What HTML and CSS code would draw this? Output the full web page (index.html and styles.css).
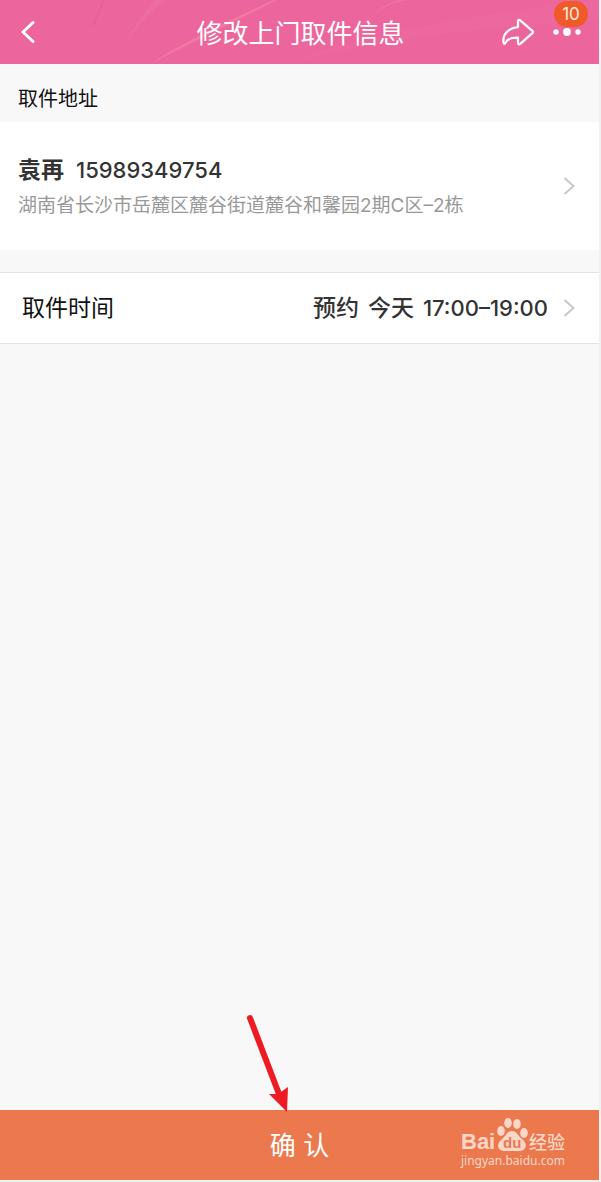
FILE: index.html
```html
<!DOCTYPE html>
<html lang="zh-CN">
<head>
    <meta charset="UTF-8">
    <meta name="viewport" content="width=device-width, initial-scale=1.0">
    <title>修改上门取件信息</title>
    <link rel="stylesheet" href="styles.css">
</head>
<body>
    <header class="header">
        <svg class="header-bg" viewBox="0 0 600 64" preserveAspectRatio="none" aria-hidden="true">
            <path d="M104 0 L93 26" stroke="#e65590" stroke-width="1.5" opacity=".4"/>
            <path d="M118 64 Q128 30 165 0 H155 Q130 28 118 64Z" fill="#f08fa8" opacity=".2"/>
            <path d="M150 64 L278 0 H274 Q190 38 150 64Z" fill="#f5a0b0" opacity=".35"/>
            <path d="M366 22 Q385 2 410 0 H398 Q380 6 366 22Z" fill="#f5a0a8" opacity=".25"/>
            <path d="M280 64 Q420 18 600 0 V20 Q420 30 280 64Z" fill="#ef76a8" opacity=".2"/>
        </svg>
        <button type="button" class="icon-btn" aria-label="返回">
            <svg width="16" height="24" viewBox="0 0 16 24"><path d="M14 2.5 L4 12 L14 21.5" fill="none" stroke="#fff" stroke-width="3" stroke-linecap="round" stroke-linejoin="round"/></svg>
        </button>
        <h1>修改上门取件信息</h1>
        <div class="header-actions">
            <button type="button" class="icon-btn" aria-label="分享">
                <svg width="34" height="28" viewBox="0 0 34 28"><path d="M17 3.4 Q17 .9 19.2 2.3 L31.4 12.8 Q32.6 14 31.4 15.2 L19.5 25.6 Q17 27.4 17 24.5 V19.6 C10 19.4 6.2 21.2 4.6 24.6 Q3.2 27.4 2.4 24.2 C1.6 15.5 8.5 9.8 17 9.2 Z" fill="none" stroke="#fff" stroke-width="2.2" stroke-linejoin="round"/></svg>
            </button>
            <button type="button" class="icon-btn more-btn" aria-label="更多">
                <svg width="30" height="10" viewBox="0 0 30 10" fill="#fff"><circle cx="4" cy="5" r="2.7"/><circle cx="15" cy="5" r="3.9"/><circle cx="26" cy="5" r="2.7"/></svg>
                <span class="badge">10</span>
            </button>
        </div>
    </header>

    <main>
        <h2 class="section-title">取件地址</h2>
        <a href="#" class="address">
            <div class="address-info">
                <p class="contact"><span>袁再</span><span class="num">15989349754</span></p>
                <p class="detail">湖南省长沙市岳麓区麓谷街道麓谷和馨园2期C区–2栋</p>
            </div>
            <svg class="arrow" width="12" height="18" viewBox="0 0 12 18"><path d="M1.5 1 L10.5 9 L1.5 17"/></svg>
        </a>
        <a href="#" class="time">
            <span class="time-label">取件时间</span>
            <span class="time-value"><span>预约</span> <span>今天</span> <span class="num">17:00–19:00</span></span>
            <svg class="arrow" width="12" height="18" viewBox="0 0 12 18"><path d="M1.5 1 L10.5 9 L1.5 17"/></svg>
        </a>
    </main>

    <footer class="footer">
        <svg class="pointer" width="44" height="98" viewBox="0 0 44 98" aria-hidden="true">
            <path d="M6 4 L35 80" stroke="#ed1c24" stroke-width="6" stroke-linecap="round"/>
            <path d="M43 98 L25 80 L34 80 L44 73 Z" fill="#ed1c24"/>
        </svg>
        <button type="submit" class="confirm">确 认</button>
        <svg class="watermark" width="112" height="52" viewBox="0 0 112 52" fill="#fbd7ca">
            <text x="2" y="31" class="wm-brand">Bai</text>
            <ellipse cx="42" cy="13" rx="3.8" ry="5"/>
            <ellipse cx="49" cy="5" rx="3.8" ry="5"/>
            <ellipse cx="58" cy="6" rx="3.8" ry="5"/>
            <ellipse cx="65" cy="15" rx="3.8" ry="5"/>
            <path d="M53 13 C48 13 47 18 43 21 C36 27 39 33 46 33 H59 C68 33 69 26 63 21 C59 18 58 13 53 13Z"/>
            <text x="44" y="30" class="wm-du">du</text>
            <text x="70" y="31" class="wm-cn">经验</text>
            <text x="2" y="47" class="wm-url">jingyan.baidu.com</text>
        </svg>
    </footer>
</body>
</html>
```
FILE: styles.css
```css
:root {
    --pink: #ec659c;
    --orange: #ec784d;
    --bg: #f8f8f8;
    --line: #e4e4e4;
    --font-primary: Inter, "Noto Sans CJK SC", sans-serif;
}

* {
    margin: 0;
    padding: 0;
    box-sizing: border-box;
}

body {
    display: flex;
    flex-direction: column;
    min-height: 100vh;
    background: var(--bg);
    border-right: 2px solid #f1f1f1;
    border-bottom: 2px solid #f1f1f1;
    font-family: var(--font-primary);
    color: #111;
}

a {
    color: inherit;
    text-decoration: none;
}

button {
    border: none;
    background: none;
    font-family: inherit;
    color: white;
    cursor: pointer;
}

svg {
    display: block;
    flex-shrink: 0;
}

/* Header */
.header {
    position: relative;
    display: grid;
    grid-template-columns: 1fr auto 1fr;
    align-items: center;
    height: 64px;
    padding: 0 17px 0 19px;
    background: var(--pink);
    color: white;
}

.header > * {
    position: relative;
}

.header .header-bg {
    position: absolute;
    top: 0;
    left: 0;
    width: 100%;
    height: 100%;
}

.header h1 {
    padding-top: 4px;
    font-size: 26px;
    line-height: 32px;
    font-weight: 400;
}

.header-actions {
    display: flex;
    align-items: center;
    justify-content: flex-end;
    gap: 17px;
}

.icon-btn {
    justify-self: start;
}

.more-btn {
    position: relative;
}

.badge {
    position: absolute;
    right: -6px;
    bottom: 10px;
    width: 34px;
    border-radius: 13px;
    background: #ee5b28;
    color: #ffe9df;
    font-size: 17px;
    line-height: 26px;
    text-align: center;
}

/* Pickup details */
.section-title {
    padding: 22px 18px 10px;
    font-size: 20px;
    line-height: 26px;
    font-weight: 400;
}

.address,
.time {
    display: flex;
    align-items: center;
    background: white;
}

.address {
    min-height: 128px;
    padding: 0 24px 0 18px;
    margin-bottom: 22px;
}

.address-info {
    flex: 1;
    padding-top: 4px;
}

.contact {
    display: flex;
    gap: 12px;
    font-size: 23px;
    line-height: 36px;
    font-weight: 600;
    color: #333;
}

.num {
    font-size: 22px;
    font-weight: 500;
}

.detail {
    font-size: 19px;
    line-height: 36px;
    color: #999;
}

.arrow {
    fill: none;
    stroke: #c8c8cc;
    stroke-width: 2;
}

.time {
    min-height: 72px;
    padding: 0 24px 0 22px;
    border-top: 1px solid var(--line);
    border-bottom: 1px solid var(--line);
    font-size: 23px;
    line-height: 32px;
}

.time-value {
    display: flex;
    gap: 9px;
    margin-left: auto;
    margin-right: 15px;
    font-weight: 500;
    color: #333;
}

/* Footer */
.footer {
    position: relative;
    margin-top: auto;
}

.confirm {
    display: block;
    width: 100%;
    height: 70px;
    padding-bottom: 4px;
    background: var(--orange);
    font-size: 26px;
    font-weight: 400;
}

.pointer {
    position: absolute;
    left: 50%;
    bottom: 68px;
    margin-left: -56px;
}

.watermark {
    position: absolute;
    right: 28px;
    bottom: 10px;
}

.wm-brand {
    font: 700 22px "Liberation Sans", sans-serif;
}

.wm-du {
    font: 700 15px "Liberation Sans", sans-serif;
    fill: var(--orange);
}

.wm-cn {
    font: 500 18px "Noto Sans CJK SC", sans-serif;
}

.wm-url {
    font: 400 12px "Noto Sans", sans-serif;
}
```
